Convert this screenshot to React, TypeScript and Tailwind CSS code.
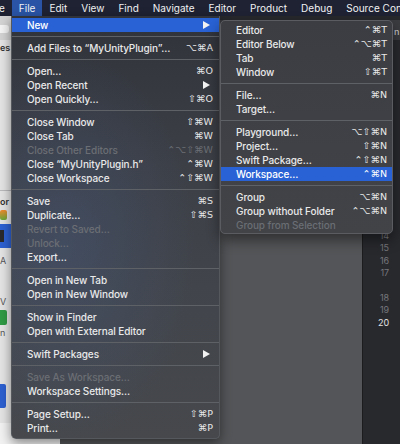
import clsx from 'clsx';

type Item = { label: string; keys?: string; off?: boolean; arrow?: boolean; on?: boolean } | null;

const FILE_MENU: Item[] = [
  { label: 'New', arrow: true, on: true },
  null,
  { label: 'Add Files to “MyUnityPlugin”…', keys: '⌥⌘A' },
  null,
  { label: 'Open…', keys: '⌘O' },
  { label: 'Open Recent', arrow: true },
  { label: 'Open Quickly…', keys: '⇧⌘O' },
  null,
  { label: 'Close Window', keys: '⇧⌘W' },
  { label: 'Close Tab', keys: '⌘W' },
  { label: 'Close Other Editors', keys: '⌃⌥⇧⌘W', off: true },
  { label: 'Close “MyUnityPlugin.h”', keys: '⌃⌘W' },
  { label: 'Close Workspace', keys: '⌃⇧⌘W' },
  null,
  { label: 'Save', keys: '⌘S' },
  { label: 'Duplicate…', keys: '⇧⌘S' },
  { label: 'Revert to Saved…', off: true },
  { label: 'Unlock…', off: true },
  { label: 'Export…' },
  null,
  { label: 'Open in New Tab' },
  { label: 'Open in New Window' },
  null,
  { label: 'Show in Finder' },
  { label: 'Open with External Editor' },
  null,
  { label: 'Swift Packages', arrow: true },
  null,
  { label: 'Save As Workspace…', off: true },
  { label: 'Workspace Settings…' },
  null,
  { label: 'Page Setup…', keys: '⇧⌘P' },
  { label: 'Print…', keys: '⌘P' },
];

const NEW_MENU: Item[] = [
  { label: 'Editor', keys: '⌃⌘T' },
  { label: 'Editor Below', keys: '⌃⌥⌘T' },
  { label: 'Tab', keys: '⌘T' },
  { label: 'Window', keys: '⇧⌘T' },
  null,
  { label: 'File…', keys: '⌘N' },
  { label: 'Target…' },
  null,
  { label: 'Playground…', keys: '⌥⇧⌘N' },
  { label: 'Project…', keys: '⇧⌘N' },
  { label: 'Swift Package…', keys: '⌃⇧⌘N' },
  { label: 'Workspace…', keys: '⌃⌘N', on: true },
  null,
  { label: 'Group', keys: '⌥⌘N' },
  { label: 'Group without Folder', keys: '⌃⌥⌘N' },
  { label: 'Group from Selection', off: true },
];

const BAR = ['File', 'Edit', 'View', 'Find', 'Navigate', 'Editor', 'Product', 'Debug', 'Source Control'];

function MenuRows({ items, pad }: { items: Item[]; pad: string }) {
  return (
    <>
      {items.map((item, i) =>
        item === null ? (
          <div key={i} className="flex h-[9px] items-center">
            <div className="h-px w-full bg-[#5e6166]" />
          </div>
        ) : (
          <div
            key={i}
            className={clsx(
              'flex h-[14px] items-center justify-between whitespace-nowrap',
              pad,
              item.on ? 'bg-[#2962d5] text-white' : item.off ? 'text-[#6b6e74]' : 'text-[#e9e9ea]',
            )}
          >
            <span>{item.label}</span>
            {item.keys && (
              <span className="font-['DejaVu_Sans',sans-serif] text-[9.5px] tracking-normal">{item.keys}</span>
            )}
            {item.arrow && (
              <svg width="7" height="8" viewBox="0 0 7 8" className="mr-[3px]">
                <path d="M0 0 L7 4 L0 8 Z" fill="#f2f2f2" />
              </svg>
            )}
          </div>
        ),
      )}
    </>
  );
}

function Sidebar() {
  return (
    <div className="flex w-[60px] flex-col bg-[#e4e4e5] text-[9px] font-semibold text-[#333]">
      <div className="h-[24px] bg-[#d3d3d4] pt-[9px]">
        <div className="h-[8px] w-[9px] rounded-r-[3px] bg-[#f4f4f4]" />
      </div>
      <div className="h-[16px] pt-[1px] leading-[14px]">es</div>
      <div className="h-[134px]" />
      <div className="h-px bg-[#b9b9bb]" />
      <div className="h-[17px] pt-[5px] leading-[12px]">or</div>
      <div className="h-[16px] pt-[2px]">
        <div className="h-[10px] w-[7px] rounded-[2px] bg-[linear-gradient(180deg,#f08a2c,#6aa83a)]" />
      </div>
      <div className="h-[24px] bg-[#2d61d2] pt-[6px]">
        <div className="h-[12px] w-[4px] bg-[#2a2a2c]" />
      </div>
      <div className="h-[20px] pt-[8px] leading-[10px] font-normal text-[#555]">A</div>
      <div className="h-[28px]" />
      <div className="h-[12px] leading-[12px] font-normal text-[#555]">V</div>
      <div className="h-[18px] pt-[2px]">
        <div className="h-[15px] w-[7px] rounded-r-[2px] bg-[#2f9b45]" />
      </div>
      <div className="h-[14px] pt-[2px] leading-[10px] font-normal text-[#555]">n</div>
      <div className="h-[44px]" />
      <div className="h-[26px]">
        <div className="h-[24px] w-[6px] rounded-r-[2px] bg-[#2c5fd0]" />
      </div>
      <div className="h-[13px]" />
      <div className="flex-1 bg-[#f2f2f2]" />
    </div>
  );
}

export default function App() {
  return (
    <div className="relative flex h-[444px] w-[400px] flex-col overflow-hidden bg-[#545558] font-['Inter','DejaVu_Sans',sans-serif] text-[10px] font-medium tracking-[-0.1px]">
      {/* menu bar */}
      <div className="flex h-4 shrink-0 items-center overflow-hidden whitespace-nowrap bg-[#1e2232] text-[10px] font-normal tracking-normal text-[#f2f2f4]">
        <span className="-ml-px pr-[7px]">e</span>
        {BAR.map((m) => (
          <span key={m} className={clsx('flex h-4 items-center px-[7px]', m === 'File' && 'bg-[#2a55a6]')}>
            {m}
          </span>
        ))}
      </div>

      {/* window behind */}
      <div className="flex flex-1">
        <Sidebar />
        <div className="flex flex-1 flex-col">
          <div className="h-[24px] border-t-4 border-[#27282c] bg-[#3b3c40] pl-[334px] pt-[5px] text-[9px] text-[#c8c8ca]">
            n
          </div>
          <div className="flex flex-1">
            <div className="flex-1 bg-[#545558]" />
            <div className="flex w-[38px] flex-col border-l border-[#1c1c1e] bg-[#28292d] pr-[11px] pt-[190px] text-right text-[9px] font-normal text-[#76777c]">
              {['14', '15', '16', '17', '', '18', '19'].map((n, i) => (
                <div key={i} className="h-[12.4px] leading-[12.4px]">
                  {n}
                </div>
              ))}
              <div className="h-[12.4px] leading-[12.4px] text-[#e2e2e4]">20</div>
            </div>
          </div>
        </div>
      </div>

      {/* File menu */}
      <div className="absolute left-[11px] top-4 w-[209px] rounded-b-[5px] border-x border-b border-[#55585d] bg-[image:radial-gradient(ellipse_at_25%_55%,rgba(72,96,140,0.35),transparent_60%),linear-gradient(180deg,#30333a_0%,#3c3f46_35%,#42454b_70%,#46484c_100%)] pb-[3px] pt-[2px] shadow-[0_4px_12px_rgba(0,0,0,0.45)]">
        <MenuRows items={FILE_MENU} pad="pl-[15px] pr-[6px]" />
      </div>

      {/* New submenu */}
      <div className="absolute left-[220px] top-5 w-[173px] rounded-[5px] border border-[#5a5c61] bg-[image:linear-gradient(180deg,#3b3d42_0%,#3f4146_60%,#414347_100%)] pb-[1px] pt-[2px] shadow-[0_6px_14px_rgba(0,0,0,0.45)]">
        <MenuRows items={NEW_MENU} pad="pl-[15px] pr-[5px]" />
      </div>
    </div>
  );
}
